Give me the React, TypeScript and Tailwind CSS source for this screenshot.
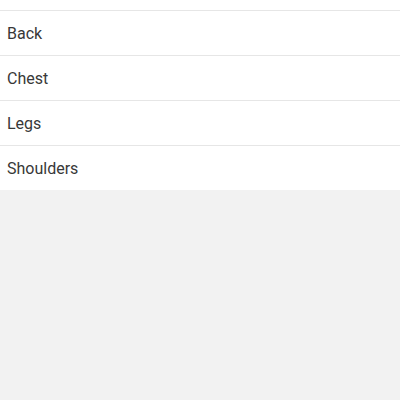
export default function App() {
  const items = ["Back", "Chest", "Legs", "Shoulders"];
  return (
    <div className="w-[400px] h-[400px] bg-[#f2f2f2] overflow-hidden" style={{ fontFamily: "Roboto, 'Noto Sans', sans-serif" }}>
      <div className="bg-white">
        <div className="h-[10px]" />
        {items.map((it) => (
          <div key={it} className="h-[45px] border-t border-[#e6e6e6] flex items-center pt-[2px] px-[7px] text-[16px] text-[#383838]">
            {it}
          </div>
        ))}
      </div>
    </div>
  );
}
